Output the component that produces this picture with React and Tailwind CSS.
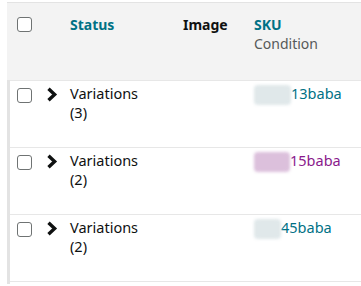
import React from 'react';

const rows = [
    { count: 3, sku: '13baba', blur: 'w-[37px] bg-[#e0e8ea]', skuColor: 'text-[#007185]' },
    { count: 2, sku: '15baba', blur: 'w-[36px] bg-[#dcc0dc]', skuColor: 'text-[#8a1a8c]' },
    { count: 2, sku: '45baba', blur: 'w-[27px] bg-[#e0e8ea]', skuColor: 'text-[#007185]' },
];

const Checkbox = () => (
    <span className="block w-[15px] h-[15px] rounded-[3px] border border-[#6f7373] bg-white" />
);

const Chevron = () => (
    <svg width="12" height="15" viewBox="0 0 12 15" className="block">
        <path d="M2.5 1.8 L8.6 7.5 L2.5 13.2" fill="none" stroke="#0f1111" strokeWidth="3.4" strokeLinejoin="miter" />
    </svg>
);

export default function App() {
    return (
        <div className="w-[361px] h-[286px] bg-white pt-[2px] overflow-hidden" style={{ fontFamily: '"Noto Sans", Arial, sans-serif' }}>
            <div className="ml-[7px] border-t border-[#e3e3e3]">
                {/* header */}
                <div className="flex h-[77px] bg-[#f3f3f3] text-[14px] leading-[19px]">
                    <div className="w-[33px] pl-[10px] pt-[14px]">
                        <Checkbox />
                    </div>
                    <div className="w-[30px]" />
                    <div className="w-[113px] pt-[12px] font-bold text-[#007185]">Status</div>
                    <div className="w-[71px] pt-[12px] font-bold text-[#0f1111]">Image</div>
                    <div className="flex-1 pt-[12px]">
                        <div className="font-bold text-[#007185]">SKU</div>
                        <div className="text-[#565959]">Condition</div>
                    </div>
                </div>

                {/* body */}
                <div className="border-l-[3px] border-[#e3e3e3]">
                    {rows.map((r, i) => (
                        <div key={i} className="flex h-[67px] border-t border-[#e7e7e7] text-[14.5px] leading-[19px] text-[#0f1111]">
                            <div className="w-[30px] pl-[7px] pt-[7px]">
                                <Checkbox />
                            </div>
                            <div className="w-[30px] pl-[6px] pt-[6px]">
                                <Chevron />
                            </div>
                            <div className="w-[113px] pt-[3px]">
                                <div>Variations</div>
                                <div>({r.count})</div>
                            </div>
                            <div className="w-[71px]" />
                            <div className="flex-1 pt-[3px] flex items-start">
                                <span className={`h-[20px] mt-[1px] rounded-[4px] blur-[1.5px] ${r.blur}`} />
                                <span className={r.skuColor}>{r.sku}</span>
                            </div>
                        </div>
                    ))}
                    <div className="h-[3px] border-t border-[#e7e7e7]" />
                </div>
            </div>
        </div>
    );
}
